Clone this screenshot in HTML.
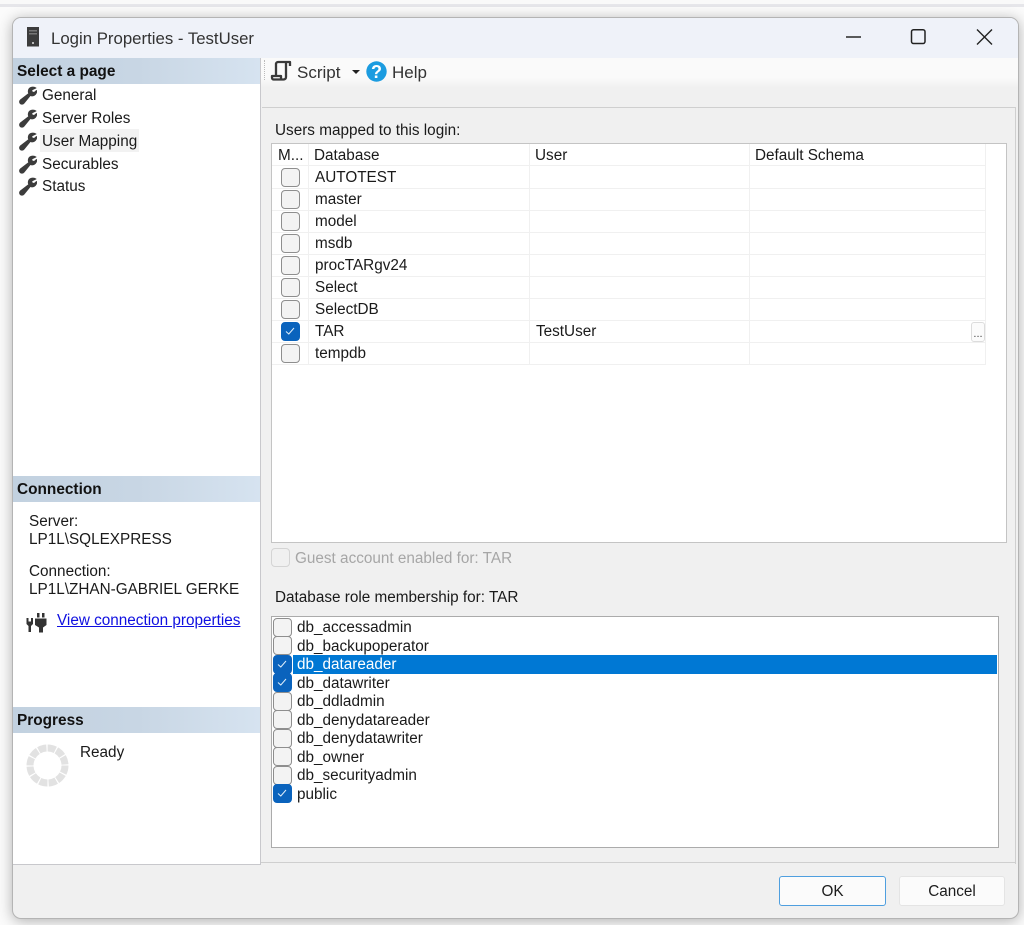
<!DOCTYPE html>
<html><head><meta charset="utf-8"><style>
*{box-sizing:border-box}
html,body{margin:0;padding:0;width:1024px;height:925px;overflow:hidden;background:#fff;font-family:"Liberation Sans",sans-serif;color:#1a1a1a}
.a{position:absolute}
.t{position:absolute;margin-top:1px;font-size:15.3px;line-height:18px;height:18px;white-space:nowrap;color:#1a1a1a}
.h{position:absolute;left:13px;width:247px;height:26px;background:linear-gradient(90deg,#c2d1e0,#c8d6e4 50%,#d6e3f0);font-weight:bold;font-size:15.4px;line-height:27px;padding-left:4px;color:#111}
.cb{position:absolute;width:19px;height:19px;border:1.5px solid #8e8e8e;border-radius:4px;background:#f3f3f3}
.cb.on{background:#0a63bd;border-color:#0a63bd}
.cb svg{position:absolute;left:2px;top:2px}
.ln{position:absolute;background:#f0f0f0}
</style></head><body>
<div class="a" style="left:0;top:0;width:1024px;height:4px;background:#f9f9f9"></div>
<div class="a" style="left:0;top:4px;width:1024px;height:3px;background:#e6e6ea"></div>
<div class="a" style="left:0;top:7px;width:1024px;height:918px;background:#fbfbfb"></div>
<div class="a" style="left:12px;top:17px;width:1007px;height:902px;border-radius:9px;background:#f0f0f0;border:1px solid #b4b4b4;box-shadow:0 2px 14px rgba(0,0,0,.3);overflow:hidden">
<div class="a" style="left:0;top:0;width:1005px;height:40px;background:#eff2f9"></div>
</div>

<svg class="a" style="left:26px;top:27px" width="14" height="20" viewBox="0 0 14 20"><rect x="1" y="0" width="12" height="19.500" fill="#3c3c3c"/><rect x="3" y="3" width="8" height="1.500" fill="#777"/><rect x="3" y="6" width="8" height="1.500" fill="#777"/><rect x="6" y="15" width="2" height="2" fill="#bbb"/></svg>
<div class="t" style="left:51px;top:28px;font-size:16.800px;line-height:20px;height:20px;color:#333">Login Properties - TestUser</div>

<svg class="a" style="left:840px;top:24px" width="160" height="26" viewBox="0 0 160 26"><path d="M6 13H21" stroke="#333" stroke-width="1.600"/><rect x="71.500" y="5.700" width="13.500" height="13.800" rx="2" fill="none" stroke="#222" stroke-width="1.500"/><path d="M137 5.500L152 20.500M152 5.500L137 20.500" stroke="#222" stroke-width="1.400" fill="none"/></svg>

<!-- right toolbar -->
<div class="a" style="left:261px;top:58px;width:757px;height:20px;background:#fafafa"></div>
<div class="a" style="left:261px;top:78px;width:757px;height:10px;background:linear-gradient(#fafafa,#f0f0f0)"></div>
<div class="a" style="left:261px;top:88px;width:757px;height:19px;background:#f0f0f0"></div>
<div class="a" style="left:262px;top:107px;width:754px;height:1px;background:#cfcfcf"></div>
<div class="a" style="left:1015px;top:107px;width:1px;height:757px;background:#cfcfcf"></div>
<div class="a" style="left:261px;top:862px;width:755px;height:1px;background:#cfcfcf"></div>
<div class="a" style="left:264px;top:60px;width:1px;height:20px;border-left:1px dotted #bbb"></div>
<svg class="a" style="left:270px;top:60px" width="22" height="22" viewBox="0 0 22 22"><path d="M6 16V4C6 2.800 7 2 8 2H20V6M16 2.500V17C16 18.500 15 19.500 13.500 19.500H3.500C2.500 19.500 2 18.800 2 17.500V16H11V19" fill="none" stroke="#3a3a3a" stroke-width="2.300" stroke-linejoin="round"/></svg>
<div class="t" style="left:297px;top:62px;font-size:17px;line-height:20px;height:20px;color:#333">Script</div>
<svg class="a" style="left:352px;top:70px" width="8" height="5"><path d="M0 0H8L4 4Z" fill="#222"/></svg>
<svg class="a" style="left:366px;top:61px" width="21" height="21" viewBox="0 0 21 21"><circle cx="10.500" cy="10.500" r="10.200" fill="#1c9ce0"/><text x="10.500" y="17" text-anchor="middle" font-family="Liberation Sans" font-weight="bold" font-size="18" fill="#fff">?</text></svg>
<div class="t" style="left:392px;top:62px;font-size:17px;line-height:20px;height:20px;color:#333">Help</div>

<!-- left panel -->
<div class="a" style="left:13px;top:58px;width:248px;height:807px;background:#fff;border-right:1px solid #c8c8cc;border-bottom:1px solid #c8c8cc"></div>
<div class="h" style="top:58px">Select a page</div>
<div class="a" style="left:40px;top:129px;width:99px;height:23px;background:#f2f2f2"></div>
<svg width="0" height="0" style="position:absolute"><defs><path id="w" d="M17 2C14.500 .5 11 1 9.800 3.200C9 4.800 9.200 6.300 9.800 7.500L1.500 13.800C.2 15 .3 16.500 1.300 17.500C2.300 18.500 3.800 18.500 5 17.200L11.300 9.500C13 10.200 15 9.800 16.300 8.500C17.500 7.300 17.900 6 17.500 4.500L15.200 6.500L13 5.800L12.800 4Z" fill="#3c3c3c" stroke="#3c3c3c" stroke-width=".9" stroke-linejoin="round"/></defs></svg>
<svg class="a" style="left:19px;top:86px" width="18" height="19"><use href="#w"/></svg>
<svg class="a" style="left:19px;top:109px" width="18" height="19"><use href="#w"/></svg>
<svg class="a" style="left:19px;top:132px" width="18" height="19"><use href="#w"/></svg>
<svg class="a" style="left:19px;top:155px" width="18" height="19"><use href="#w"/></svg>
<svg class="a" style="left:19px;top:177px" width="18" height="19"><use href="#w"/></svg>
<div class="t" style="left:42px;top:86px">General</div>
<div class="t" style="left:42px;top:109px">Server Roles</div>
<div class="t" style="left:42px;top:132px">User Mapping</div>
<div class="t" style="left:42px;top:155px">Securables</div>
<div class="t" style="left:42px;top:177px">Status</div>

<div class="h" style="top:476px">Connection</div>
<div class="t" style="left:29px;top:512px">Server:</div>
<div class="t" style="left:29px;top:530px">LP1L\SQLEXPRESS</div>
<div class="t" style="left:29px;top:562px">Connection:</div>
<div class="t" style="left:29px;top:580px">LP1L\ZHAN-GABRIEL GERKE</div>
<svg class="a" style="left:26px;top:612px" width="21" height="21" viewBox="0 0 21 21"><path d="M0.500 6H2.500V9.500H5V6H7V12L5 14V20H2.500V14L0.500 12Z" fill="#333"/><path d="M9 6.500H20.500V13L17 15.500V20.500H13V15.500L9 13Z" fill="#333"/><rect x="11" y="1" width="2.500" height="4.500" fill="#333"/><rect x="16" y="1" width="2.500" height="4.500" fill="#333"/></svg>
<div class="t" style="left:57px;top:611px;color:#0f0fe0;text-decoration:underline">View connection properties</div>

<div class="h" style="top:707px">Progress</div>
<svg class="a" style="left:26px;top:744px" width="43" height="43" viewBox="0 0 43 43"><circle cx="21.500" cy="21.500" r="17.500" fill="none" stroke="#e2e2e2" stroke-width="7" stroke-dasharray="8 1.160"/></svg>
<div class="t" style="left:80px;top:743px">Ready</div>

<!-- right content -->
<div class="t" style="left:275px;top:121px">Users mapped to this login:</div>
<div class="a" style="left:271px;top:143px;width:736px;height:400px;background:#fff;border:1px solid #c4c4c4"></div>
<div class="ln" style="left:272px;top:165px;width:714px;height:1px"></div>
<div class="ln" style="left:272px;top:188px;width:714px;height:1px"></div>
<div class="ln" style="left:272px;top:210px;width:714px;height:1px"></div>
<div class="ln" style="left:272px;top:232px;width:714px;height:1px"></div>
<div class="ln" style="left:272px;top:254px;width:714px;height:1px"></div>
<div class="ln" style="left:272px;top:276px;width:714px;height:1px"></div>
<div class="ln" style="left:272px;top:298px;width:714px;height:1px"></div>
<div class="ln" style="left:272px;top:320px;width:714px;height:1px"></div>
<div class="ln" style="left:272px;top:342px;width:714px;height:1px"></div>
<div class="ln" style="left:272px;top:364px;width:714px;height:1px"></div>
<div class="ln" style="left:308px;top:144px;width:1px;height:221px"></div>
<div class="ln" style="left:529px;top:144px;width:1px;height:221px"></div>
<div class="ln" style="left:749px;top:144px;width:1px;height:221px"></div>
<div class="ln" style="left:985px;top:144px;width:1px;height:221px"></div>
<div class="t" style="left:278px;top:146px">M...</div>
<div class="t" style="left:314px;top:146px">Database</div>
<div class="t" style="left:535px;top:146px">User</div>
<div class="t" style="left:755px;top:146px">Default Schema</div>

<div class="cb" style="left:281px;top:167.500px"></div><div class="t" style="left:315px;top:168px">AUTOTEST</div>
<div class="cb" style="left:281px;top:189.500px"></div><div class="t" style="left:315px;top:190px">master</div>
<div class="cb" style="left:281px;top:211.500px"></div><div class="t" style="left:315px;top:212px">model</div>
<div class="cb" style="left:281px;top:233.500px"></div><div class="t" style="left:315px;top:234px">msdb</div>
<div class="cb" style="left:281px;top:255.500px"></div><div class="t" style="left:315px;top:256px">procTARgv24</div>
<div class="cb" style="left:281px;top:277.500px"></div><div class="t" style="left:315px;top:278px">Select</div>
<div class="cb" style="left:281px;top:299.500px"></div><div class="t" style="left:315px;top:300px">SelectDB</div>
<div class="cb on" style="left:281px;top:321.500px"><svg width="12" height="12"><path d="M2 6.500L4.800 9L10 3" fill="none" stroke="#dfeefa" stroke-width="1"/></svg></div><div class="t" style="left:315px;top:322px">TAR</div><div class="t" style="left:536px;top:322px">TestUser</div>
<div class="cb" style="left:281px;top:343.500px"></div><div class="t" style="left:315px;top:344px">tempdb</div>
<div class="a" style="left:971px;top:322px;width:14px;height:20px;background:#fbfbfb;border:1px solid #dcdcdc;border-radius:3px;font-size:11px;line-height:22px;text-align:center;color:#444">...</div>

<div class="cb" style="left:271px;top:548px;border-color:#d4d4d4;background:#f0f0f0"></div>
<div class="t" style="left:295px;top:549px;color:#a6a6a6">Guest account enabled for: TAR</div>
<div class="t" style="left:275px;top:588px">Database role membership for: TAR</div>

<div class="a" style="left:271px;top:616px;width:728px;height:232px;background:#fff;border:1px solid #ababab"></div>
<div class="a" style="left:293px;top:655px;width:704px;height:18.500px;background:#0078d4"></div>
<div class="cb" style="left:273px;top:617.500px"></div><div class="t" style="left:297px;top:618px">db_accessadmin</div>
<div class="cb" style="left:273px;top:636px"></div><div class="t" style="left:297px;top:636.500px">db_backupoperator</div>
<div class="cb on" style="left:273px;top:654.500px"><svg width="12" height="12"><path d="M2 6.500L4.800 9L10 3" fill="none" stroke="#dfeefa" stroke-width="1"/></svg></div><div class="t" style="left:297px;top:655px;color:#fff">db_datareader</div>
<div class="cb on" style="left:273px;top:673px"><svg width="12" height="12"><path d="M2 6.500L4.800 9L10 3" fill="none" stroke="#dfeefa" stroke-width="1"/></svg></div><div class="t" style="left:297px;top:673.500px">db_datawriter</div>
<div class="cb" style="left:273px;top:691.500px"></div><div class="t" style="left:297px;top:692px">db_ddladmin</div>
<div class="cb" style="left:273px;top:710px"></div><div class="t" style="left:297px;top:710.500px">db_denydatareader</div>
<div class="cb" style="left:273px;top:728.500px"></div><div class="t" style="left:297px;top:729px">db_denydatawriter</div>
<div class="cb" style="left:273px;top:747px"></div><div class="t" style="left:297px;top:747.500px">db_owner</div>
<div class="cb" style="left:273px;top:765.500px"></div><div class="t" style="left:297px;top:766px">db_securityadmin</div>
<div class="cb on" style="left:273px;top:784px"><svg width="12" height="12"><path d="M2 6.500L4.800 9L10 3" fill="none" stroke="#dfeefa" stroke-width="1"/></svg></div><div class="t" style="left:297px;top:784.500px">public</div>

<div class="a" style="left:779px;top:876px;width:107px;height:30px;background:#fbfbfb;border:1px solid #4f9fdf;border-radius:3px;font-size:15.300px;line-height:29px;text-align:center;color:#1c1c1c">OK</div>
<div class="a" style="left:899px;top:876px;width:106px;height:30px;background:#fbfbfb;border:1px solid #e4e4e4;border-radius:3px;font-size:15.300px;line-height:29px;text-align:center;color:#1c1c1c">Cancel</div>
</body></html>
